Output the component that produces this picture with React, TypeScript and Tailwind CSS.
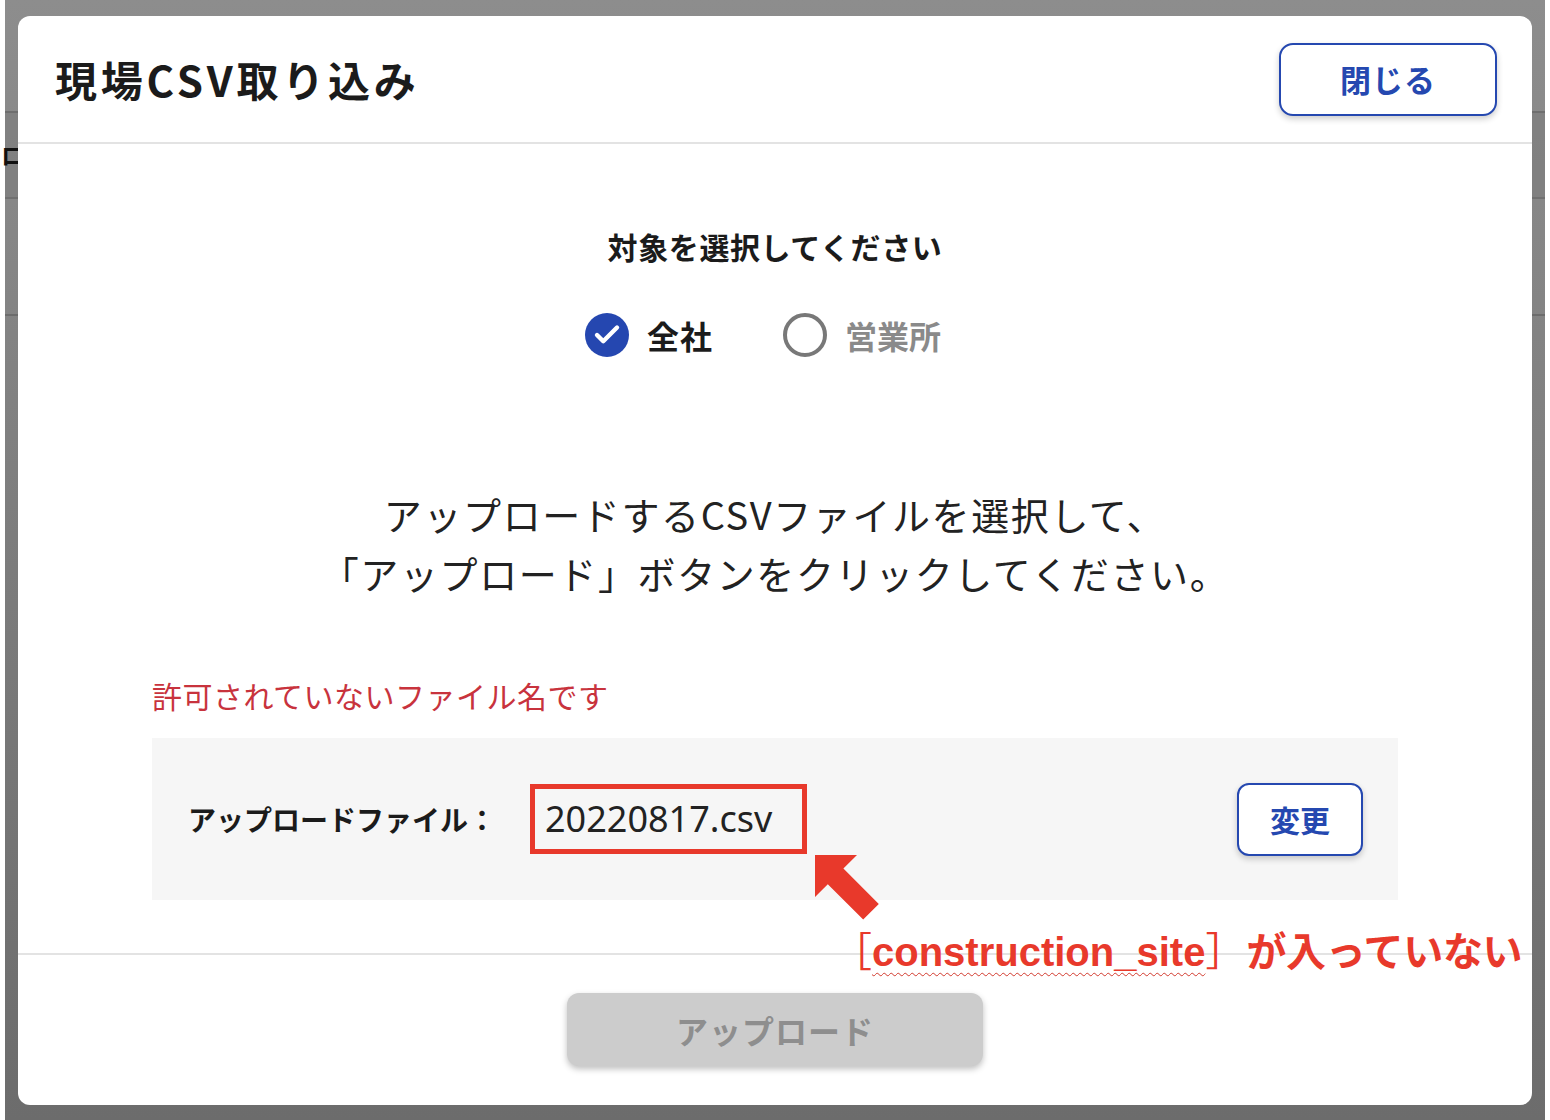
import { Check } from "lucide-react";

const App = () => {
  return (
    <div className="h-[1120px] w-[1550px] overflow-hidden bg-white px-[5px] font-['Noto_Sans_CJK_JP','Noto_Sans',sans-serif]">
      <div className="relative h-full bg-gradient-to-b from-[#8d8d8d] to-[#6c6c6c]">
        {/* page behind the overlay */}
        <div className="h-[113px] border-b-2 border-[#6e6e6e]" />
        <div className="flex h-[86px] items-center border-b-2 border-[#707070] bg-[#7c7c7c]/60">
          <span className="-ml-[4px] text-[24px] font-bold leading-none text-[#111]">ロ</span>
        </div>
        <div className="h-[117px] border-b-2 border-[#6c6c6c]" />

        <div className="absolute left-[13px] top-[16px] flex h-[1089px] w-[1514px] flex-col rounded-[12px] bg-white">
          <header className="flex h-[128px] items-center justify-between border-b-2 border-[#e3e3e3] pl-[37px] pr-[35px]">
            <h1 className="text-[42px] font-bold leading-none tracking-[3.8px] text-[#1b1b1b]">現場CSV取り込み</h1>
            <button className="h-[73px] w-[218px] rounded-[14px] border-2 border-[#2548b0] bg-white text-[31px] font-bold tracking-[1px] text-[#2548b0] shadow-[0_3px_6px_rgba(0,0,0,0.2)]">
              閉じる
            </button>
          </header>

          <section className="flex flex-col items-center px-[134px] pb-[53px] pt-[82px]">
            <p className="text-[30px] font-bold leading-[40px] tracking-[0.6px] text-[#1b1b1b]">対象を選択してください</p>
            <div className="mt-[47px] flex items-center pr-[24px]">
              <label className="flex items-center gap-[18px]">
                <span className="flex h-[44px] w-[44px] items-center justify-center rounded-full bg-[#2547b0]">
                  <Check className="h-[30px] w-[30px] text-white" strokeWidth={3.5} />
                </span>
                <span className="text-[32px] font-bold leading-[44px] tracking-[1px] text-[#1b1b1b]">全社</span>
              </label>
              <label className="ml-[70px] flex items-center gap-[18px]">
                <span className="h-[44px] w-[44px] rounded-full border-4 border-[#787878]" />
                <span className="text-[32px] font-bold leading-[44px] text-[#8a8a8a]">営業所</span>
              </label>
            </div>

            <p className="mt-[127px] text-center text-[38px] leading-[59px] tracking-[1.6px] text-[#222]">
              アップロードするCSVファイルを選択して、
              <br />
              「アップロード」ボタンをクリックしてください。
            </p>

            <p className="mt-[73px] self-start text-[30px] leading-[40px] tracking-[0.5px] text-[#c8333d]">許可されていないファイル名です</p>

            <div className="mt-[23px] flex h-[162px] w-full items-center bg-[#f6f6f6] pl-[36px] pr-[35px]">
              <span className="text-[28px] font-bold text-[#1b1b1b]">アップロードファイル：</span>
              <span className="ml-[34px] flex h-[70px] w-[277px] items-center border-[5px] border-[#e8392b] pl-[10px] font-['Noto_Sans',sans-serif] text-[36px] text-[#222]">
                20220817.csv
              </span>
              <button className="ml-auto h-[73px] w-[126px] rounded-[12px] border-2 border-[#2548b0] bg-white text-[30px] font-bold text-[#2548b0] shadow-[0_3px_6px_rgba(0,0,0,0.2)]">
                変更
              </button>
            </div>
          </section>

          <footer className="flex justify-center border-t-2 border-[#e3e3e3] pt-[38px]">
            <button className="h-[73px] w-[416px] rounded-[12px] bg-[#cccccc] text-[32px] font-bold tracking-[1px] text-[#8e8e8e] shadow-[0_3px_6px_rgba(0,0,0,0.25)]">
              アップロード
            </button>
          </footer>
        </div>

        {/* annotation */}
        <svg className="absolute left-[798px] top-[847px]" width="80" height="80" viewBox="0 0 80 80">
          <polygon points="12,8 54,8 40.4,21.6 75.8,57 60.2,72.6 24.8,37.2 12,50" fill="#e8392b" />
        </svg>
        <p className="absolute left-[827px] top-[924px] whitespace-nowrap text-[40px] font-bold leading-[50px] text-[#e8392b]">
          <span className="font-normal">［</span>
          <span className="font-['Liberation_Sans',sans-serif] underline decoration-[#d23a2e] decoration-wavy decoration-1 underline-offset-[6px]">
            construction_site
          </span>
          <span className="font-normal">］</span>
          <span className="ml-[1px] tracking-[-0.3px]">が入っていない</span>
        </p>
      </div>
    </div>
  );
};

export default App;
